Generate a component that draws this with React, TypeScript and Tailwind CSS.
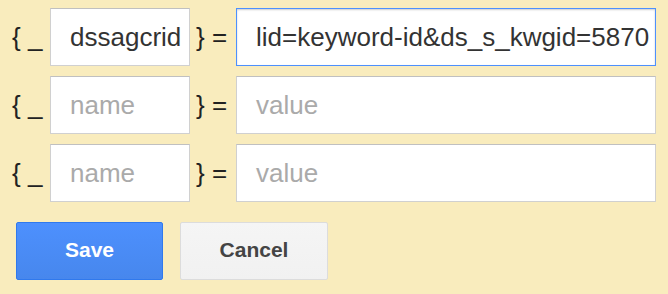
import React from "react";

function Row({ name, value, focused }: { name?: string; value?: string; focused?: boolean }) {
  return (
    <div className="flex h-[58px] items-center">
      <div className="w-[50px] shrink-0 whitespace-nowrap pl-3 text-[26px] text-[#222]">{"{ _"}</div>
      <div className="flex h-[58px] w-[140px] shrink-0 items-center overflow-hidden whitespace-nowrap border border-[#d0d0d0] border-t-[#c0c0c0] bg-white pl-[19px] text-[26px]">
        {name ? <span className="text-[#333]">{name}</span> : <span className="text-[#aaa]">name</span>}
      </div>
      <div className="w-[46px] shrink-0 whitespace-nowrap pl-[6px] text-[26px] text-[#222]">{"} ="}</div>
      <div
        className={
          "flex h-[58px] w-[420px] shrink-0 items-center overflow-hidden whitespace-nowrap bg-white pl-[19px] text-[26px] " +
          (focused ? "border border-[#4d90fe] shadow-[inset_0_1px_2px_rgba(0,0,0,0.2)]" : "border border-[#d0d0d0] border-t-[#c0c0c0]")
        }
      >
        {value ? <span className="text-[#333]">{value}</span> : <span className="text-[#aaa]">value</span>}
      </div>
    </div>
  );
}

export default function App() {
  return (
    <div className="h-[294px] w-[668px] bg-[#f9ecbd] pt-2" style={{ fontFamily: '"Liberation Sans", Arial, sans-serif' }}>
      <div className="flex flex-col gap-[10px]">
        <Row name="dssagcrid" value="lid=keyword-id&ds_s_kwgid=5870" focused />
        <Row />
        <Row />
      </div>
      <div className="mt-5 flex gap-[17px] pl-4">
        <button className="flex h-[58px] w-[147px] items-center justify-center rounded-[2px] border border-[#3079ed] bg-gradient-to-b from-[#4d90fe] to-[#4787ed] pb-[3px] text-[21px] font-bold text-white">
          Save
        </button>
        <button className="flex h-[58px] w-[148px] items-center justify-center rounded-[2px] border border-[#dcdcdc] bg-gradient-to-b from-[#f5f5f5] to-[#f1f1f1] pb-[3px] text-[21px] font-bold text-[#444]">
          Cancel
        </button>
      </div>
    </div>
  );
}
